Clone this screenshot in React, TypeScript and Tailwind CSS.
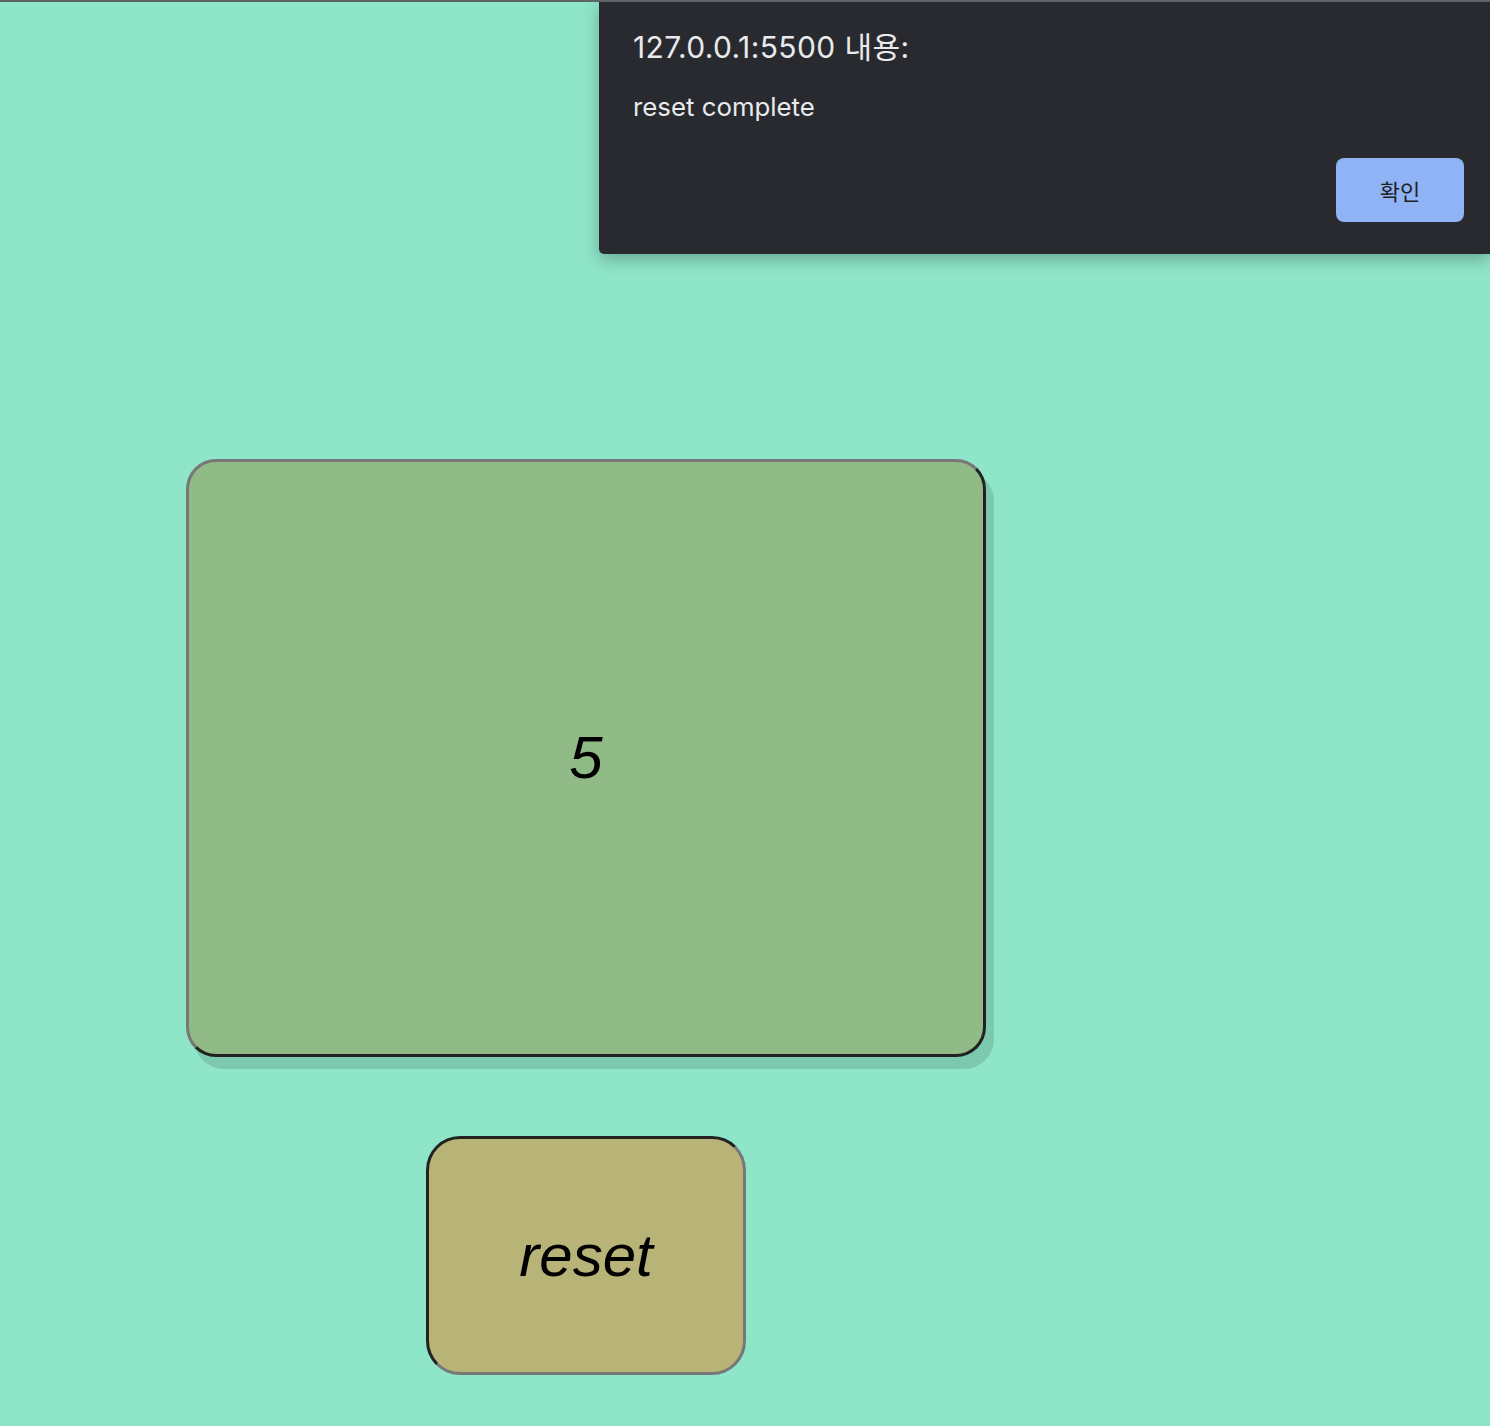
import { useState } from "react";

export default function App() {
  const [count, setCount] = useState(5);

  return (
    <div className="relative min-h-[1426px] w-full bg-[#8fe5c8] font-['Liberation_Sans',Arial,sans-serif] overflow-hidden">
      {/* browser top edge */}
      <div className="absolute top-0 left-0 h-[2px] w-full bg-[#5f6368] z-20" />

      {/* main column */}
      <div className="pl-[186px] pt-[459px]">
        <div className="flex w-[800px] flex-col items-center gap-[79px]">
          <div
            onClick={() => setCount(count + 1)}
            className="flex h-[598px] w-[800px] items-center justify-center rounded-[30px] border-[3px] border-t-[#777777] border-l-[#777777] border-r-[#222222] border-b-[#222222] bg-[#90bb87] shadow-[8px_12px_0_rgba(90,150,130,0.35)]"
          >
            <span className="text-[60px] italic leading-none text-black">{count}</span>
          </div>

          <button
            onClick={() => setCount(0)}
            className="flex h-[239px] w-[320px] items-center justify-center rounded-[34px] border-[3px] border-t-[#222222] border-l-[#222222] border-r-[#777777] border-b-[#777777] bg-[#b8b477]"
          >
            <span className="text-[60px] italic leading-none text-black">reset</span>
          </button>
        </div>
      </div>

      {/* alert dialog */}
      <div className="absolute top-0 left-[599px] z-10 h-[254px] w-[891px] rounded-bl-[5px] bg-[#292a2f] px-[34px] pt-[29px] shadow-[0_6px_16px_rgba(0,0,0,0.25)] font-['Inter','Noto_Sans_CJK_KR',sans-serif]">
        <div className="text-[30px] leading-[36px] tracking-[0.4px] text-[#e8eaed]">127.0.0.1:5500 내용:</div>
        <div className="mt-[27px] text-[25.8px] leading-[30px] text-[#e8eaed]">reset complete</div>
        <div className="mt-[36px] flex justify-end">
          <button className="-mr-[8px] h-[64px] w-[128px] rounded-[8px] bg-[#8fb3f5] text-[22px] text-[#202124] font-['Noto_Sans_CJK_KR',sans-serif]">
            확인
          </button>
        </div>
      </div>
    </div>
  );
}
